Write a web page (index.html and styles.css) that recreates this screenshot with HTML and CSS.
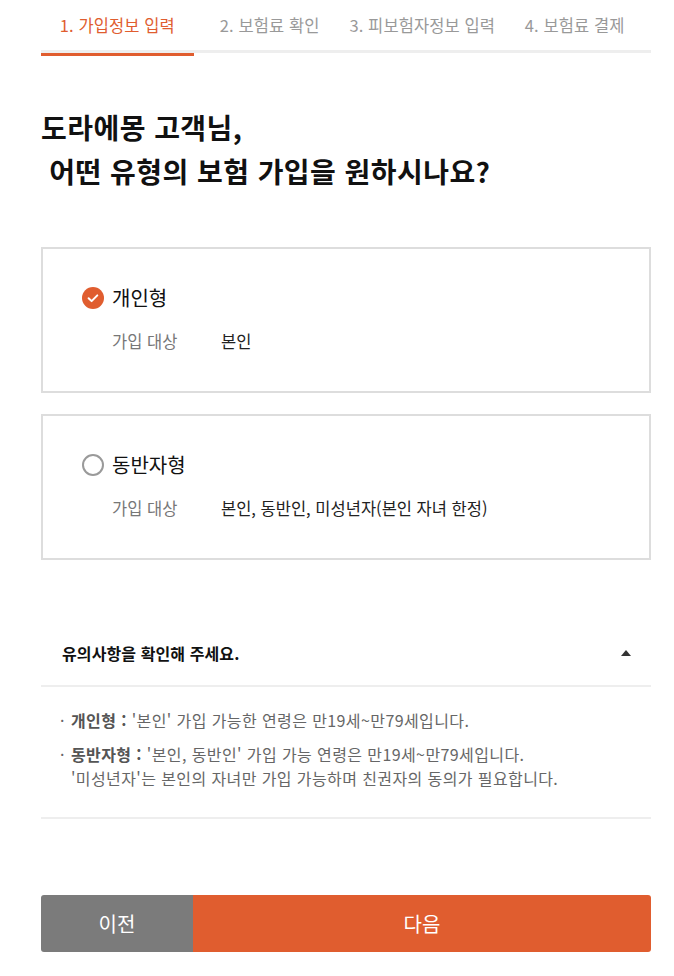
FILE: index.html
```html
<!DOCTYPE html>
<html lang="ko">
<head>
<meta charset="utf-8">
<title>가입정보 입력</title>
<link rel="stylesheet" href="styles.css">
</head>
<body>
<div class="page">
  <nav class="steps">
    <div class="step active">1. 가입정보 입력</div>
    <div class="step">2. 보험료 확인</div>
    <div class="step">3. 피보험자정보 입력</div>
    <div class="step">4. 보험료 결제</div>
  </nav>

  <h1 class="title">도라에몽 고객님,<br>&nbsp;어떤 유형의 보험 가입을 원하시나요?</h1>

  <div class="cards">
    <div class="card">
      <div class="card-head">
        <span class="check">
          <svg width="22" height="22" viewBox="0 0 22 22"><circle cx="11" cy="11" r="11" fill="#e05d2f"/><path d="M6.6 11.2 L9.6 14.1 L15.3 8.4" fill="none" stroke="#fff" stroke-width="2" stroke-linecap="round" stroke-linejoin="round"/></svg>
        </span>
        <span class="card-title">개인형</span>
      </div>
      <div class="card-info">
        <span class="info-label">가입 대상</span>
        <span class="info-value">본인</span>
      </div>
    </div>
    <div class="card">
      <div class="card-head">
        <span class="check">
          <svg width="22" height="22" viewBox="0 0 22 22"><circle cx="11" cy="11" r="10" fill="#fff" stroke="#9a9a9a" stroke-width="2"/></svg>
        </span>
        <span class="card-title">동반자형</span>
      </div>
      <div class="card-info">
        <span class="info-label">가입 대상</span>
        <span class="info-value">본인, 동반인, 미성년자(본인 자녀 한정)</span>
      </div>
    </div>
  </div>

  <section class="notice">
    <div class="notice-head">
      <span class="notice-title">유의사항을 확인해 주세요.</span>
      <span class="arrow-up"></span>
    </div>
    <ul class="notice-list">
      <li><span class="dot">·</span><span class="txt"><b>개인형 :</b> '본인' 가입 가능한 연령은 만19세~만79세입니다.</span></li>
      <li><span class="dot">·</span><span class="txt"><b>동반자형 :</b> '본인, 동반인' 가입 가능 연령은 만19세~만79세입니다.<br>'미성년자'는 본인의 자녀만 가입 가능하며 친권자의 동의가 필요합니다.</span></li>
    </ul>
  </section>

  <div class="buttons">
    <button class="btn btn-prev">이전</button>
    <button class="btn btn-next">다음</button>
  </div>
</div>
</body>
</html>
```

FILE: styles.css
```css
* { box-sizing: border-box; }
html, body { margin: 0; padding: 0; background: #fff; }
body {
  font-family: "Noto Sans CJK KR", "Noto Sans", sans-serif;
  color: #222;
}
.page {
  width: 610px;
  margin: 0 0 0 41px;
}
.steps {
  display: flex;
  height: 53px;
  border-bottom: 3px solid #eee;
}
.step {
  flex: 1;
  height: 53px;
  line-height: 50px;
  padding-bottom: 3px;
  text-align: center;
  font-size: 16.5px;
  color: #999;
  letter-spacing: 0.1px;
  white-space: nowrap;
}
.step.active {
  color: #e05d2f;
  border-bottom: 3px solid #e05d2f;
  margin-bottom: -3px;
  height: 56px;
}
.title {
  margin: 52px 0 0;
  font-size: 28px;
  line-height: 44px;
  font-weight: 700;
  color: #111;
  letter-spacing: 0.45px;
}
.cards {
  margin-top: 54px;
  display: flex;
  flex-direction: column;
  gap: 21px;
}
.card {
  height: 146px;
  border: 2px solid #ddd;
  padding: 37px 39px 0;
}
.card-head {
  display: flex;
  align-items: center;
  height: 24px;
}
.check {
  width: 22px;
  height: 22px;
  display: block;
  margin-right: 8px;
}
.check svg { display: block; }
.card-title {
  font-size: 20px;
  line-height: 24px;
  color: #111;
  letter-spacing: 0;
}
.card-info {
  display: flex;
  margin-top: 19px;
  padding-left: 30px;
  font-size: 16.5px;
  line-height: 24px;
  letter-spacing: 0;
}
.info-label {
  width: 109px;
  color: #777;
}
.info-value {
  color: #222;
}
.notice {
  margin-top: 63px;
}
.notice-head {
  display: flex;
  justify-content: space-between;
  align-items: center;
  height: 64px;
  padding: 0 20px 2px 21px;
  border-bottom: 2px solid #eee;
}
.notice-title {
  font-size: 16px;
  font-weight: 700;
  color: #111;
  letter-spacing: 0.1px;
}
.arrow-up {
  width: 0;
  height: 0;
  border-left: 5px solid transparent;
  border-right: 5px solid transparent;
  border-bottom: 6px solid #333;
}
.notice-list {
  list-style: none;
  margin: 0;
  padding: 21px 0 27px 19px;
  border-bottom: 2px solid #eee;
  display: flex;
  flex-direction: column;
  gap: 10px;
}
.notice-list li {
  display: flex;
  font-size: 16px;
  line-height: 24px;
  color: #666;
  letter-spacing: 0.4px;
}
.dot {
  width: 11px;
  flex: none;
}
.txt b {
  font-weight: 700;
  color: #555;
}
.buttons {
  display: flex;
  margin-top: 76px;
  height: 57px;
  border-radius: 3px;
  overflow: hidden;
}
.btn {
  border: 0;
  margin: 0;
  padding: 0;
  font-family: inherit;
  font-size: 20px;
  color: #fff;
  cursor: pointer;
}
.btn-prev {
  width: 152px;
  background: #7b7b7b;
}
.btn-next {
  flex: 1;
  background: #e05d2f;
}
```
